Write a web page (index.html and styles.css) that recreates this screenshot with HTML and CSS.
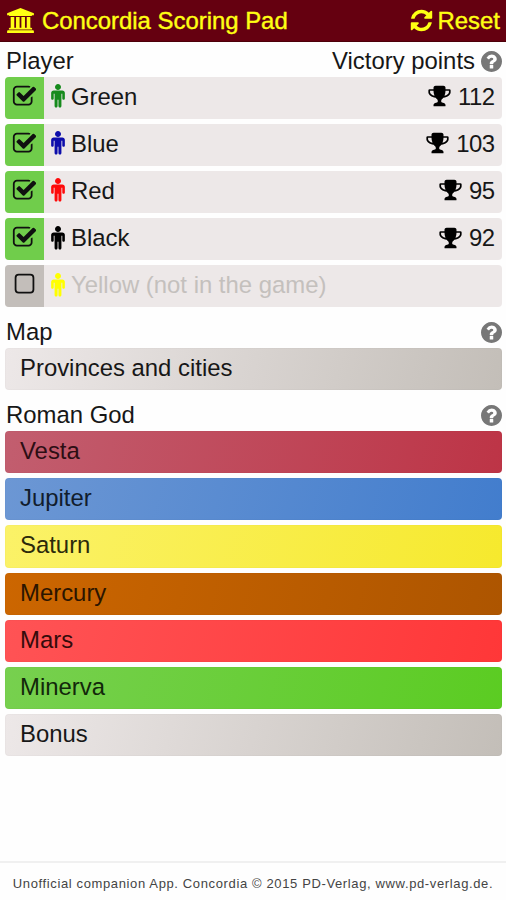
FILE: index.html
```html
<!DOCTYPE html>
<html lang="en">
<head>
<meta charset="utf-8">
<title>Concordia Scoring Pad</title>
<link rel="stylesheet" href="styles.css">
</head>
<body>
<svg class="defs" aria-hidden="true">
  <symbol id="university" viewBox="0 0 1920 1792"><path d="M960 0l960 384v128h-128q0 26-20.500 45t-48.500 19h-1526q-28 0-48.500-19t-20.500-45h-128v-128zM256 640h256v768h128v-768h256v768h128v-768h256v768h128v-768h256v768h59q28 0 48.500 19t20.500 45v64h-1664v-64q0-26 20.500-45t48.500-19h59zM1851 1600q28 0 48.500 19t20.500 45v128h-1920v-128q0-26 20.500-45t48.500-19z"/></symbol>
  <symbol id="refresh" viewBox="0 0 1792 1792"><path d="M1639 1056q0 5-1 7-64 268-268 434.500t-478 166.500q-146 0-282.500-55t-243.500-157l-129 129q-19 19-45 19t-45-19-19-45v-448q0-26 19-45t45-19h448q26 0 45 19t19 45-19 45l-137 137q71 66 161 102t187 36q134 0 250-65t186-179q11-17 53-117 8-23 30-23h192q13 0 22.500 9.500t9.500 22.500zm25-800v448q0 26-19 45t-45 19h-448q-26 0-45-19t-19-45 19-45l138-138q-148-137-349-137-134 0-250 65t-186 179q-11 17-53 117-8 23-30 23h-199q-13 0-22.500-9.500t-9.500-22.500v-7q65-268 270-434.500t480-166.500q146 0 284 55.500t245 156.500l130-129q19-19 45-19t45 19 19 45z"/></symbol>
  <symbol id="help" viewBox="128 128 1536 1536"><path d="M1024 1376v-192q0-14-9-23t-23-9h-192q-14 0-23 9t-9 23v192q0 14 9 23t23 9h192q14 0 23-9t9-23zm256-672q0-88-55.500-163t-138.500-116-170-41q-243 0-371 213-15 24 8 42l132 100q7 6 19 6 16 0 25-12 53-68 86-92 34-24 86-24 48 0 85.500 26t37.500 59q0 38-20 61t-68 45q-63 28-115.500 86.500t-52.500 125.500v36q0 14 9 23t23 9h192q14 0 23-9t9-23q0-19 21.500-49.500t54.500-49.500q32-18 49-28.500t46-35 44.500-48 28-60.500 12.500-81zm384 192q0 209-103 385.500t-279.500 279.500-385.500 103-385.500-103-279.500-279.500-103-385.500 103-385.500 279.500-279.500 385.500-103 385.500 103 279.500 279.500 103 385.500z"/></symbol>
  <symbol id="checked" viewBox="0 0 1792 1792"><path d="M1472 930v318q0 119-84.500 203.500t-203.500 84.500h-832q-119 0-203.500-84.500t-84.500-203.500v-832q0-119 84.500-203.500t203.500-84.500h832q63 0 117 25 15 7 18 23 3 17-9 29l-49 49q-10 10-23 10-3 0-9-2-23-6-45-6h-832q-66 0-113 47t-47 113v832q0 66 47 113t113 47h832q66 0 113-47t47-113v-254q0-13 9-22l64-64q10-10 23-10 6 0 12 3 20 8 20 29zm231-489l-814 814q-24 24-57 24t-57-24l-430-430q-24-24-24-57t24-57l110-110q24-24 57-24t57 24l263 263 647-647q24-24 57-24t57 24l110 110q24 24 24 57t-24 57z"/></symbol>
  <symbol id="unchecked" viewBox="0 0 1792 1792"><rect x="256" y="192" width="1280" height="1280" rx="224" fill="none" stroke="currentColor" stroke-width="128"/></symbol>
  <symbol id="trophy" viewBox="0 0 1792 1792"><path d="M522 883q-74-162-74-371h-256v96q0 78 94.500 162t235.500 113zm1078-275v-96h-256q0 209-74 371 141-29 235.500-113t94.500-162zm128-128v128q0 71-41.500 143t-112 130-173 97.500-215.500 44.500q-42 54-95 95-38 34-52.500 72.500t-14.500 89.500q0 54 30.500 91t97.500 37q75 0 133.500 45.500t58.500 114.500v64q0 14-9 23t-23 9h-832q-14 0-23-9t-9-23v-64q0-69 58.500-114.500t133.500-45.500q67 0 97.500-37t30.500-91q0-51-14.500-89.500t-52.500-72.500q-53-41-95-95-113-5-215.500-44.500t-173-97.500-112-130-41.500-143v-128q0-40 28-68t68-28h288v-96q0-66 47-113t113-47h576q66 0 113 47t47 113v96h288q40 0 68 28t28 68z"/></symbol>
  <symbol id="male" viewBox="384 0 1024 1792"><path d="M1408 672v416q0 40-28 68t-68 28-68-28-28-68v-352h-64v912q0 46-33 79t-79 33-79-33-33-79v-464h-64v464q0 46-33 79t-79 33-79-33-33-79v-912h-64v352q0 40-28 68t-68 28-68-28-28-68v-416q0-80 56-136t136-56h640q80 0 136 56t56 136zm-288-448q0 93-65.500 158.500t-158.500 65.500-158.500-65.500-65.500-158.500 65.500-158.500 158.500-65.500 158.500 65.500 65.500 158.500z"/></symbol>
</svg>

<header class="topbar">
  <svg class="icon-university"><use href="#university"/></svg>
  <h1 class="title">Concordia Scoring Pad</h1>
  <svg class="icon-refresh"><use href="#refresh"/></svg>
  <span class="reset">Reset</span>
</header>

<main class="content">
  <div class="label label-first"><span>Player</span><span class="label-right">Victory points</span><svg class="help"><use href="#help"/></svg></div>
  <div class="list">
    <div class="player"><div class="toggle"><svg><use href="#checked"/></svg></div><svg class="male green"><use href="#male"/></svg><span class="name">Green</span><svg class="trophy"><use href="#trophy"/></svg><span class="points">112</span></div>
    <div class="player"><div class="toggle"><svg><use href="#checked"/></svg></div><svg class="male blue"><use href="#male"/></svg><span class="name">Blue</span><svg class="trophy"><use href="#trophy"/></svg><span class="points">103</span></div>
    <div class="player"><div class="toggle"><svg><use href="#checked"/></svg></div><svg class="male red"><use href="#male"/></svg><span class="name">Red</span><svg class="trophy"><use href="#trophy"/></svg><span class="points">95</span></div>
    <div class="player"><div class="toggle"><svg><use href="#checked"/></svg></div><svg class="male black"><use href="#male"/></svg><span class="name">Black</span><svg class="trophy"><use href="#trophy"/></svg><span class="points">92</span></div>
    <div class="player absent"><div class="toggle off"><svg><use href="#unchecked"/></svg></div><svg class="male yellow"><use href="#male"/></svg><span class="name">Yellow (not in the game)</span></div>
  </div>

  <div class="label"><span>Map</span><svg class="help"><use href="#help"/></svg></div>
  <div class="list">
    <div class="bar neutral">Provinces and cities</div>
  </div>

  <div class="label"><span>Roman God</span><svg class="help"><use href="#help"/></svg></div>
  <div class="list">
    <div class="bar vesta">Vesta</div>
    <div class="bar jupiter">Jupiter</div>
    <div class="bar saturn">Saturn</div>
    <div class="bar mercury">Mercury</div>
    <div class="bar mars">Mars</div>
    <div class="bar minerva">Minerva</div>
    <div class="bar neutral">Bonus</div>
  </div>
</main>

<footer class="footer">Unofficial companion App. Concordia © 2015 PD-Verlag, www.pd-verlag.de.</footer>
</body>
</html>
```

FILE: styles.css
```css
* { box-sizing: border-box; }

body {
  margin: 0;
  height: 900px;
  display: flex;
  flex-direction: column;
  overflow: hidden;
  background: #fefefe;
  color: #171717;
  font: 23.900px "Liberation Sans", Arial, sans-serif;
}

svg { flex: none; fill: currentColor; }
.defs { display: none; }

.topbar {
  height: 42px;
  flex: none;
  display: flex;
  align-items: center;
  padding: 0 6px 0 7px;
  background: #650010;
  border-bottom: 1px solid #4d0009;
  color: #ffff13;
}
.title {
  margin: 0 auto 0 8px;
  font-size: 23.900px;
  font-weight: normal;
  -webkit-text-stroke: 0.4px currentColor;
}
.reset { -webkit-text-stroke: 0.4px currentColor; }
.icon-university { width: 27px; height: 25px; }
.icon-refresh { width: 25px; height: 25px; margin-right: 4px; }

.content { padding: 0 4px 0 5px; }

.label {
  height: 40.700px;
  display: flex;
  align-items: center;
  justify-content: space-between;
  padding: 9px 0 0 1px;
}
.label-first { height: 34.500px; padding-top: 4px; }
.label-right { margin: 0 6px 0 auto; }
.help { width: 21px; height: 21px; color: #777; }

.list { display: flex; flex-direction: column; gap: 5px; }

.player {
  height: 42.200px;
  display: flex;
  align-items: center;
  padding-right: 8px;
  border-radius: 4px;
  overflow: hidden;
  background: #ede8e8;
}
.toggle {
  width: 39px;
  height: 100%;
  display: flex;
  align-items: center;
  justify-content: center;
  padding-bottom: 3px;
  background: #70cd4b;
  color: #101010;
}
.toggle svg { width: 25px; height: 25px; }
.off { background: #c3beba; }
.male { width: 14px; height: 24px; margin: 0 6px 3px 7px; }
.name { margin-right: auto; padding-bottom: 2px; }
.trophy { width: 25px; height: 24px; margin: 0 6px 3px 0; color: #000; }
.points { padding-bottom: 2px; letter-spacing: -0.5px; margin-right: -0.5px; }
.absent .name { color: #c4c0bd; }
.green { color: #168a1c; }
.blue { color: #0d0dab; }
.red { color: #fe0b0b; }
.black { color: #000; }
.yellow { color: #ffff00; }

.bar {
  height: 42.200px;
  padding-left: 15px;
  line-height: 40px;
  border-radius: 4px;
  box-shadow: inset 0 0 1px 1px rgba(0, 0, 0, 0.02);
}
.neutral { background: linear-gradient(105deg, #ede8e8, #c3beb8); }
.vesta { background: linear-gradient(105deg, #c25e6f, #bd3446); color: #2d0e14; }
.jupiter { background: linear-gradient(105deg, #6c97d4, #427dcd); color: #111d2d; }
.saturn { background: linear-gradient(105deg, #fbf268, #f6e92d); color: #2c2a0a; }
.mercury { background: linear-gradient(105deg, #cc6600, #ad5500); color: #2b1500; }
.mars { background: linear-gradient(105deg, #ff5355, #ff3738); color: #350b0b; }
.minerva { background: linear-gradient(105deg, #77d04f, #5bcc22); color: #12280a; }

.footer {
  margin-top: auto;
  height: 39px;
  flex: none;
  border-top: 2px solid #f0f0f0;
  line-height: 41px;
  font-size: 13px;
  letter-spacing: 0.630px;
  text-align: center;
  white-space: nowrap;
  color: #444;
}
```
